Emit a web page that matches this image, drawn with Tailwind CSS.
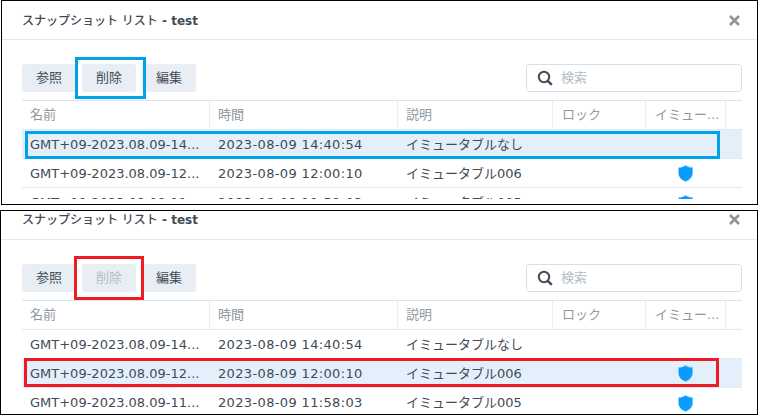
<!DOCTYPE html>
<html lang="ja">
<head>
<meta charset="utf-8" />
<title>スナップショット リスト</title>
<script src="https://cdn.jsdelivr.net/npm/@tailwindcss/browser@4"></script>
</head>
<body class="w-[759px] h-[419px] overflow-hidden bg-white font-['DejaVu_Sans','Noto_Sans_CJK_JP',sans-serif] text-[13px] text-[#414b55]">

<!-- top panel -->
<section class="relative ml-px w-[757px] h-[205px] border border-black bg-white overflow-hidden">
  <header class="h-[39px] flex items-center justify-between pl-[20px] pr-[17px] border-b border-[#e3e9ef]">
    <h1 class="font-medium text-[12px] leading-none pt-px">スナップショット リスト<span class="font-bold"> - test</span></h1>
    <svg width="11" height="11" viewBox="0 0 11 11" class="mt-px"><path d="M1 1l9 9M10 1l-9 9" stroke="#8c959e" stroke-width="2.6"/></svg>
  </header>
  <div class="flex justify-between items-center pl-[20px] pr-[15px] mt-[24px] h-[28px]">
    <div class="flex gap-[6px]">
      <button class="w-[54px] h-[28px] rounded-[3px] bg-[#e9eef5]">参照</button>
      <button class="w-[54px] h-[28px] rounded-[3px] bg-[#e9eef5]">削除</button>
      <button class="w-[54px] h-[28px] rounded-[3px] bg-[#e9eef5]">編集</button>
    </div>
    <div class="w-[216px] h-[28px] rounded-[4px] border border-[#d5e0ea] flex items-center gap-[8px] pl-[10px]">
      <svg width="16" height="16" viewBox="0 0 16 16"><circle cx="7" cy="7" r="5.2" fill="none" stroke="#414b55" stroke-width="2"/><path d="M10.8 10.8l4 4" stroke="#414b55" stroke-width="2.4"/></svg>
      <span class="text-[#b4bcc4]">検索</span>
    </div>
  </div>
  <div class="ml-[20px] w-[720px] mt-[8px] h-[99px] overflow-hidden border-t border-[#dce4ec]">
    <div class="grid grid-cols-[188px_188px_155px_93px_80px_16px] h-[29px] border-b border-[#e3e9ef] text-[#8f98a1] items-center">
      <div class="pl-[8px] h-full flex items-center border-r border-[#e9eef3]">名前</div>
      <div class="pl-[8px] h-full flex items-center border-r border-[#e9eef3]">時間</div>
      <div class="pl-[8px] h-full flex items-center border-r border-[#e9eef3]">説明</div>
      <div class="pl-[9px] h-full flex items-center border-r border-[#e9eef3]">ロック</div>
      <div class="pl-[9px] h-full flex items-center border-r border-[#e9eef3]">イミュー...</div>
      <div></div>
    </div>
    <div class="grid grid-cols-[188px_188px_248px_78px_18px] h-[29px] pt-px border-b border-[#e3e9ef] bg-[#e3f0fc] items-center">
      <div class="pl-[8px]">GMT+09-2023.08.09-14...</div>
      <div class="pl-[8px] tracking-[0.35px]">2023-08-09 14:40:54</div>
      <div class="pl-[8px]">イミュータブルなし</div>
      <div></div>
      <div></div>
    </div>
    <div class="grid grid-cols-[188px_188px_248px_78px_18px] h-[29px] pt-px border-b border-[#e3e9ef] items-center">
      <div class="pl-[8px]">GMT+09-2023.08.09-12...</div>
      <div class="pl-[8px] tracking-[0.35px]">2023-08-09 12:00:10</div>
      <div class="pl-[8px]">イミュータブル006</div>
      <div class="flex justify-center"><svg width="15" height="17" viewBox="0 0 15 17"><path d="M7.5 .5C9.5 1.8 11.8 2.5 14.5 2.6V8c0 4-3 7-7 8.5C3.5 15 .5 12 .5 8V2.6C3.2 2.5 5.5 1.8 7.5 .5z" fill="#0a9bff"/><path d="M7.5 .5C9.5 1.8 11.8 2.5 14.5 2.6V8c0 4-3 7-7 8.5" fill="none" stroke="#6cc4ff"/></svg></div>
      <div></div>
    </div>
    <div class="grid grid-cols-[188px_188px_248px_78px_18px] h-[29px] pt-px items-center">
      <div class="pl-[8px]">GMT+09-2023.08.09-11...</div>
      <div class="pl-[8px] tracking-[0.35px]">2023-08-09 11:58:03</div>
      <div class="pl-[8px]">イミュータブル005</div>
      <div class="flex justify-center"><svg width="15" height="17" viewBox="0 0 15 17"><path d="M7.5 .5C9.5 1.8 11.8 2.5 14.5 2.6V8c0 4-3 7-7 8.5C3.5 15 .5 12 .5 8V2.6C3.2 2.5 5.5 1.8 7.5 .5z" fill="#0a9bff"/><path d="M7.5 .5C9.5 1.8 11.8 2.5 14.5 2.6V8c0 4-3 7-7 8.5" fill="none" stroke="#6cc4ff"/></svg></div>
      <div></div>
    </div>
  </div>
  <!-- callouts -->
  <div class="absolute left-[73px] top-[56px] w-[71px] h-[42px] border-[3px] border-[#00a2e8]"></div>
  <div class="absolute left-[23px] top-[130px] w-[695px] h-[28px] border-[3px] border-[#00a2e8]"></div>
</section>

<!-- bottom panel -->
<section class="relative mt-[5px] w-[758px] h-[205px] border border-black bg-white overflow-hidden">
  <header class="h-[29px] flex items-start justify-between pl-[21px] pr-[17px] pt-[3px] border-b border-[#e3e9ef]">
    <h1 class="font-medium text-[12px] leading-none">スナップショット リスト<span class="font-bold"> - test</span></h1>
    <svg width="11" height="11" viewBox="0 0 11 11"><path d="M1 1l9 9M10 1l-9 9" stroke="#8c959e" stroke-width="2.6"/></svg>
  </header>
  <div class="flex justify-between items-center pl-[21px] pr-[15px] mt-[24px] h-[28px]">
    <div class="flex gap-[6px]">
      <button class="w-[54px] h-[28px] rounded-[3px] bg-[#e9eef5]">参照</button>
      <button class="w-[54px] h-[28px] rounded-[3px] bg-[#e9eef5] text-[#b4bcc4]">削除</button>
      <button class="w-[54px] h-[28px] rounded-[3px] bg-[#e9eef5]">編集</button>
    </div>
    <div class="w-[216px] h-[28px] rounded-[4px] border border-[#d5e0ea] flex items-center gap-[8px] pl-[10px]">
      <svg width="16" height="16" viewBox="0 0 16 16"><circle cx="7" cy="7" r="5.2" fill="none" stroke="#414b55" stroke-width="2"/><path d="M10.8 10.8l4 4" stroke="#414b55" stroke-width="2.4"/></svg>
      <span class="text-[#b4bcc4]">検索</span>
    </div>
  </div>
  <div class="ml-[21px] w-[720px] mt-[8px] h-[114px] overflow-hidden border-t border-[#dce4ec]">
    <div class="grid grid-cols-[188px_188px_155px_93px_80px_16px] h-[29px] border-b border-[#e3e9ef] text-[#8f98a1] items-center">
      <div class="pl-[8px] h-full flex items-center border-r border-[#e9eef3]">名前</div>
      <div class="pl-[8px] h-full flex items-center border-r border-[#e9eef3]">時間</div>
      <div class="pl-[8px] h-full flex items-center border-r border-[#e9eef3]">説明</div>
      <div class="pl-[9px] h-full flex items-center border-r border-[#e9eef3]">ロック</div>
      <div class="pl-[9px] h-full flex items-center border-r border-[#e9eef3]">イミュー...</div>
      <div></div>
    </div>
    <div class="grid grid-cols-[188px_188px_248px_78px_18px] h-[29px] pt-px border-b border-[#e3e9ef] items-center">
      <div class="pl-[8px]">GMT+09-2023.08.09-14...</div>
      <div class="pl-[8px] tracking-[0.35px]">2023-08-09 14:40:54</div>
      <div class="pl-[8px]">イミュータブルなし</div>
      <div></div>
      <div></div>
    </div>
    <div class="grid grid-cols-[188px_188px_248px_78px_18px] h-[29px] pt-px border-b border-[#e3e9ef] bg-[#e3f0fc] items-center">
      <div class="pl-[8px]">GMT+09-2023.08.09-12...</div>
      <div class="pl-[8px] tracking-[0.35px]">2023-08-09 12:00:10</div>
      <div class="pl-[8px]">イミュータブル006</div>
      <div class="flex justify-center"><svg width="15" height="17" viewBox="0 0 15 17"><path d="M7.5 .5C9.5 1.8 11.8 2.5 14.5 2.6V8c0 4-3 7-7 8.5C3.5 15 .5 12 .5 8V2.6C3.2 2.5 5.5 1.8 7.5 .5z" fill="#0a9bff"/><path d="M7.5 .5C9.5 1.8 11.8 2.5 14.5 2.6V8c0 4-3 7-7 8.5" fill="none" stroke="#6cc4ff"/></svg></div>
      <div></div>
    </div>
    <div class="grid grid-cols-[188px_188px_248px_78px_18px] h-[29px] pt-px items-center">
      <div class="pl-[8px]">GMT+09-2023.08.09-11...</div>
      <div class="pl-[8px] tracking-[0.35px]">2023-08-09 11:58:03</div>
      <div class="pl-[8px]">イミュータブル005</div>
      <div class="flex justify-center"><svg width="15" height="17" viewBox="0 0 15 17"><path d="M7.5 .5C9.5 1.8 11.8 2.5 14.5 2.6V8c0 4-3 7-7 8.5C3.5 15 .5 12 .5 8V2.6C3.2 2.5 5.5 1.8 7.5 .5z" fill="#0a9bff"/><path d="M7.5 .5C9.5 1.8 11.8 2.5 14.5 2.6V8c0 4-3 7-7 8.5" fill="none" stroke="#6cc4ff"/></svg></div>
      <div></div>
    </div>
  </div>
  <!-- callouts -->
  <div class="absolute left-[73px] top-[45px] w-[70px] h-[44px] border-[3px] border-[#ed1c24]"></div>
  <div class="absolute left-[23px] top-[147px] w-[695px] h-[29px] border-[3px] border-[#ed1c24]"></div>
</section>
</body>
</html>
